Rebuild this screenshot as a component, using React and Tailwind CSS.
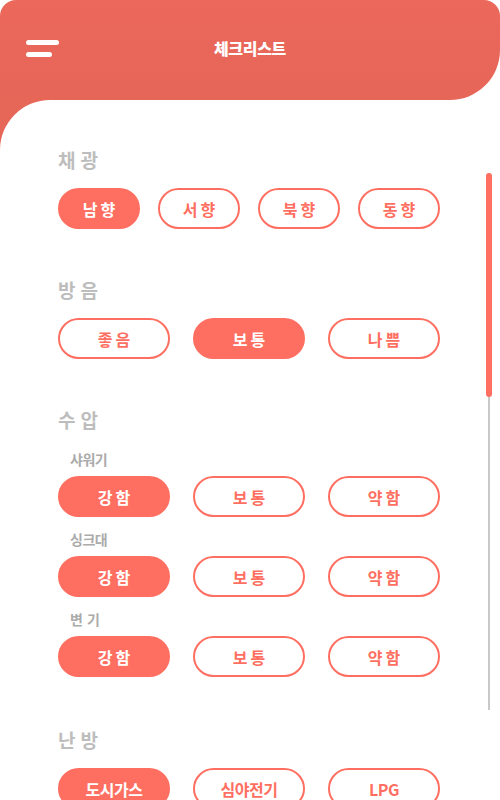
import React, { useState } from "react";

const FONT = { fontFamily: '"Noto Sans CJK KR", "Noto Sans", sans-serif' };

const Chip = ({ label, active, wide, tight, onClick }) => (
  <button
    onClick={onClick}
    className={`h-[41px] ${wide ? "w-[112px]" : "w-[82px]"} rounded-full border-2 border-[#FF6F61] text-[16px] font-bold leading-none ${
      tight ? "tracking-[-0.5px]" : "tracking-[3px] pl-[3px]"
    } ${active ? "bg-[#FF6F61] text-white" : "bg-white text-[#FF6F61]"}`}
  >
    {label}
  </button>
);

const ChipRow = ({ options, wide, tight, initial = 0, className = "" }) => {
  const [selected, setSelected] = useState(initial);
  return (
    <div className={`flex justify-between w-[382px] ${className}`}>
      {options.map((o, i) => (
        <Chip
          key={o}
          label={o}
          wide={wide}
          tight={tight}
          active={i === selected}
          onClick={() => setSelected(i)}
        />
      ))}
    </div>
  );
};

const Title = ({ children, className = "" }) => (
  <h2 className={`text-[19px] leading-[26px] font-bold text-[#BDBDBD] tracking-[5px] ${className}`}>
    {children}
  </h2>
);

const SubLabel = ({ children, className = "" }) => (
  <p className={`pl-[12px] text-[14px] leading-[18px] font-bold text-[#ABABAB] tracking-[-0.5px] ${className}`}>
    {children}
  </p>
);

export default function App() {
  return (
    <div className="relative w-[500px] h-[800px] overflow-hidden bg-white" style={FONT}>
      {/* Header */}
      <header className="h-[100px] bg-gradient-to-b from-[#EB685B] to-[#E66658] rounded-t-[16px] rounded-br-[50px] relative">
        <div className="absolute left-[26px] top-[40px] flex flex-col gap-[7px]">
          <span className="block w-[33px] h-[5px] rounded-full bg-white" />
          <span className="block w-[26px] h-[5px] rounded-full bg-white" />
        </div>
        <h1 className="pt-[37px] text-center text-white text-[16px] leading-[22px] font-black tracking-[-0.3px]">
          체크리스트
        </h1>
      </header>

      {/* Content */}
      <div className="bg-[#E66658]">
        <main className="bg-white rounded-tl-[50px] pl-[58px] pt-[47px] pb-10">
          <Title>채광</Title>
          <ChipRow className="mt-[15px]" options={["남향", "서향", "북향", "동향"]} />

          <Title className="mt-[48px]">방음</Title>
          <ChipRow className="mt-[15px]" wide initial={1} options={["좋음", "보통", "나쁨"]} />

          <Title className="mt-[48px]">수압</Title>
          <SubLabel className="mt-[17px]">샤워기</SubLabel>
          <ChipRow className="mt-[8px]" wide options={["강함", "보통", "약함"]} />
          <SubLabel className="mt-[13px]">싱크대</SubLabel>
          <ChipRow className="mt-[8px]" wide options={["강함", "보통", "약함"]} />
          <SubLabel className="mt-[13px] tracking-[4px]">변기</SubLabel>
          <ChipRow className="mt-[8px]" wide options={["강함", "보통", "약함"]} />

          <Title className="mt-[50px]">난방</Title>
          <ChipRow className="mt-[15px]" wide tight options={["도시가스", "심야전기", "LPG"]} />
        </main>
      </div>

      {/* Scrollbar */}
      <div className="absolute left-[488px] top-[173px] w-[2px] h-[537px] bg-[#C8C8C8]" />
      <div className="absolute left-[486px] top-[173px] w-[6px] h-[224px] rounded-full bg-[#FF6F61]" />
    </div>
  );
}
